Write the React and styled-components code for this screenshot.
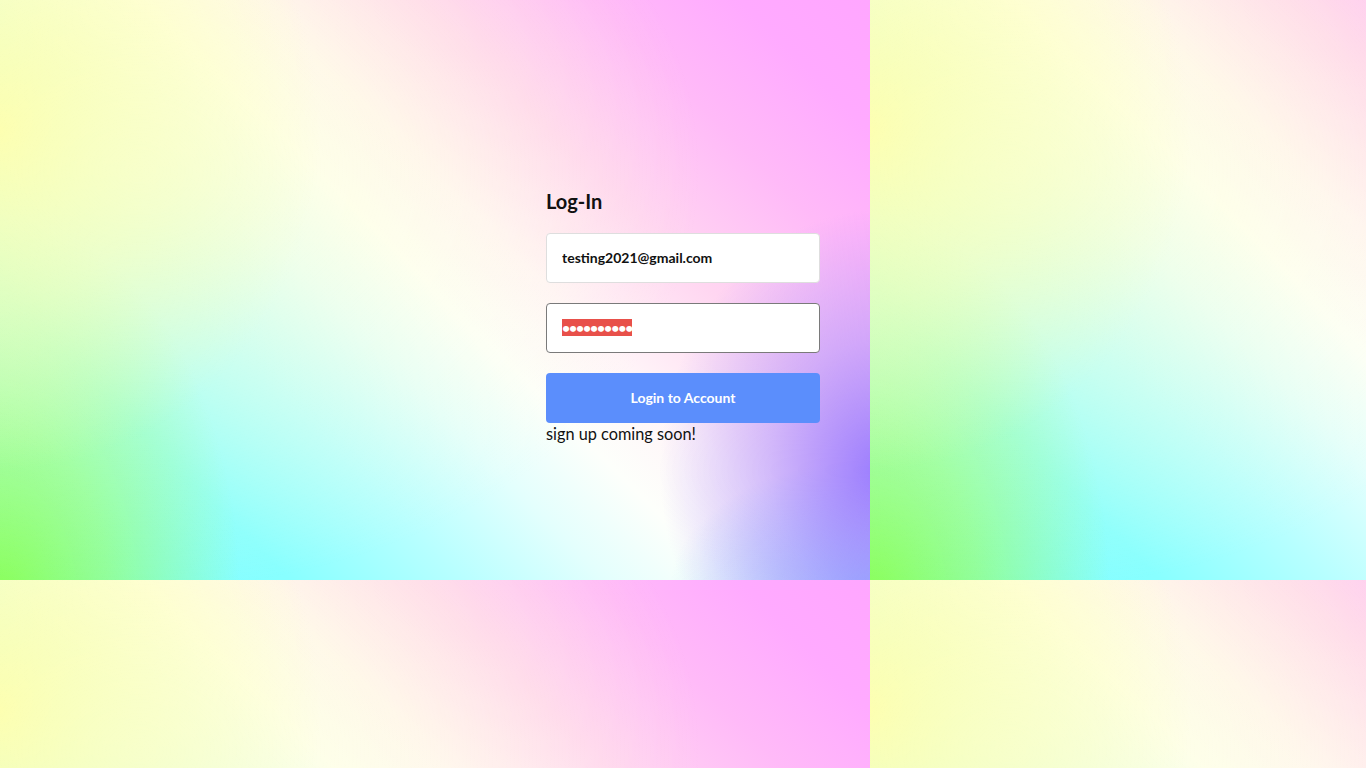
import React, { useEffect, useRef } from "react";
import styled, { createGlobalStyle } from "styled-components";

const GlobalStyles = createGlobalStyle`
  * {
    box-sizing: border-box;
  }

  html, body {
    margin: 0;
    padding: 0;
    min-height: 100%;
  }

  body {
    font-family: Lato, "Noto Sans", sans-serif;
    color: #111;
    background-color: #fff;
    background-image:
      radial-gradient(ellipse 560px 420px at 140px 170px,
        rgba(255, 255, 205, 0.6), rgba(255, 255, 215, 0) 100%),
      radial-gradient(ellipse 320px 340px at 0px 130px,
        rgba(255, 255, 150, 0.95), rgba(255, 255, 160, 0.55) 50%, rgba(255, 255, 190, 0) 100%),
      radial-gradient(ellipse 240px 380px at 0px 600px,
        rgba(140, 255, 90, 1), rgba(150, 255, 100, 0.65) 45%, rgba(170, 255, 130, 0) 100%),
      radial-gradient(ellipse 220px 260px at 880px 470px,
        rgba(150, 120, 255, 0.95), rgba(165, 135, 255, 0.5) 50%, rgba(180, 150, 255, 0) 100%),
      radial-gradient(ellipse 200px 130px at 870px 590px,
        rgba(130, 190, 255, 0.9), rgba(130, 190, 255, 0) 100%),
      linear-gradient(45deg,
        #7ffcff 0%,
        #88ffff 20%,
        #b8ffff 32%,
        #e4fffd 42%,
        #fdfffb 50%,
        #fff4f8 58%,
        #ffd6f1 69%,
        #ffbaf8 81%,
        #ffaaff 91%,
        #ffa6ff 100%);
    background-size: 870px 580px;
    background-repeat: repeat;
  }
`;

const Page = styled.main`
  min-height: 100vh;
  display: flex;
  justify-content: center;
  padding-top: 189px;
`;

const Form = styled.form`
  width: 274px;
  display: flex;
  flex-direction: column;
`;

const Title = styled.h2`
  margin: 0 0 20px;
  font-size: 20px;
  line-height: 24px;
  font-weight: 700;
  color: #111;
`;

const Field = styled.input`
  width: 100%;
  height: 50px;
  margin: 0 0 20px;
  padding: 0 15px 2px;
  border: 1px solid ${(p) => (p.$focused ? "#7a7a7a" : "#dedede")};
  border-radius: 4px;
  background: #fff;
  font-family: inherit;
  font-size: 14px;
  font-weight: 700;
  letter-spacing: ${(p) => (p.type === "password" ? "-1.1px" : "0")};
  color: #111;
  outline: none;

  &::selection {
    background: #e8504a;
    color: #fff;
  }
`;

const Button = styled.button`
  width: 100%;
  height: 50px;
  padding: 0 0 2px;
  border: none;
  border-radius: 4px;
  background: #5b8efc;
  color: #fff;
  font-family: inherit;
  font-size: 14px;
  font-weight: 700;
  cursor: pointer;

  &:hover {
    opacity: 0.9;
  }
`;

const Note = styled.p`
  margin: 1px 0 0;
  font-size: 16.3px;
  line-height: 20px;
  color: #111;
`;

const App = () => {
  const passRef = useRef(null);

  useEffect(() => {
    const el = passRef.current;
    if (el) {
      el.focus();
      el.select();
    }
  }, []);

  return (
    <Page>
      <GlobalStyles />
      <Form onSubmit={(e) => e.preventDefault()}>
        <Title>Log-In</Title>
        <Field type="email" defaultValue="testing2021@gmail.com" />
        <Field ref={passRef} type="password" defaultValue="testing123" $focused />
        <Button type="submit">Login to Account</Button>
        <Note>sign up coming soon!</Note>
      </Form>
    </Page>
  );
};

export default App;
